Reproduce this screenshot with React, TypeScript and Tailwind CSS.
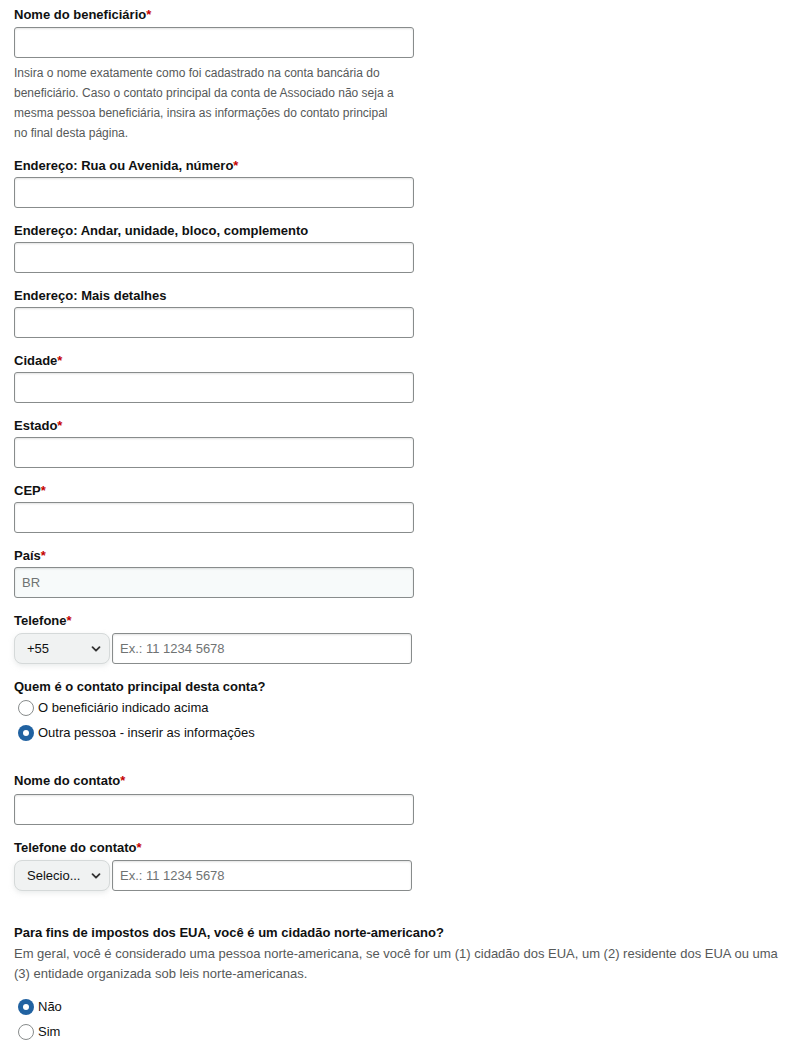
import React from 'react';

const Label: React.FC<{ text: string; required?: boolean }> = ({ text, required }) => (
  <div className="text-[13px] font-bold leading-[17px] text-[#0f1111]">
    {text}
    {required && <span className="text-[#c40000]">*</span>}
  </div>
);

const TextInput: React.FC<{ value?: string; disabled?: boolean; placeholder?: string; className?: string }> = ({
  value,
  disabled,
  placeholder,
  className = ''
}) => (
  <div
    className={`h-[31px] rounded-[3px] border border-[#888c8c] flex items-center px-[7px] text-[13px] ${
      disabled ? 'bg-[#f7fafa] text-[#6f7373]' : 'bg-white text-[#0f1111]'
    } shadow-[inset_0_1px_2px_rgba(15,17,17,0.12)] ${className}`}
  >
    {value}
    {placeholder && <span className="text-[#6f7373]">{placeholder}</span>}
  </div>
);

const Field: React.FC<{ label: string; required?: boolean; value?: string; disabled?: boolean; gap?: string }> = ({
  label,
  required,
  value,
  disabled,
  gap = 'gap-[3px]'
}) => (
  <div className={`flex flex-col ${gap}`}>
    <Label text={label} required={required} />
    <TextInput value={value} disabled={disabled} className="w-[400px]" />
  </div>
);

const PhoneField: React.FC<{ label: string; code: string }> = ({ label, code }) => (
  <div className="flex flex-col gap-[4px]">
    <Label text={label} required />
    <div className="flex gap-[2px] items-center">
      <div className="w-[96px] h-[31px] rounded-[8px] bg-[#f0f2f2] border border-[#d5d9d9] flex items-center justify-between pl-[12px] pr-[7px] text-[13px] text-[#0f1111] shadow-[0_2px_5px_rgba(213,217,217,0.5)]">
        <span>{code}</span>
        <svg width="12" height="12" viewBox="0 0 12 12" fill="none">
          <path d="M2.5 4.2 6 7.7 9.5 4.2" stroke="#333" strokeWidth="1.8" strokeLinecap="round" strokeLinejoin="round" />
        </svg>
      </div>
      <TextInput placeholder="Ex.: 11 1234 5678" className="w-[300px]" />
    </div>
  </div>
);

const Radio: React.FC<{ label: string; checked?: boolean }> = ({ label, checked }) => (
  <div className="flex items-center gap-[4px] h-[25px] pl-[4px]">
    {checked ? (
      <span className="w-[16px] h-[16px] rounded-full bg-[#2162a1] flex items-center justify-center">
        <span className="w-[6px] h-[6px] rounded-full bg-white" />
      </span>
    ) : (
      <span className="w-[16px] h-[16px] rounded-full border border-[#888c8c] bg-white" />
    )}
    <span className="text-[13px] text-[#0f1111]">{label}</span>
  </div>
);

export default function App() {
  return (
    <div className="w-[795px] min-h-[1060px] bg-white pl-[14px] pt-[6px] font-['Liberation_Sans',Arial,sans-serif]">
      <div className="flex flex-col gap-[4px]">
        <Label text="Nome do beneficiário" required />
        <TextInput className="w-[400px]" />
      </div>
      <p className="w-[385px] mt-[5px] text-[12px] leading-[20px] text-[#565959]">
        Insira o nome exatamente como foi cadastrado na conta bancária do beneficiário. Caso o contato principal
        da conta de Associado não seja a mesma pessoa beneficiária, insira as informações do contato principal
        no final desta página.
      </p>
      <div className="flex flex-col gap-[14px] mt-[14px]">
        <Field label="Endereço: Rua ou Avenida, número" required />
        <Field label="Endereço: Andar, unidade, bloco, complemento" />
        <Field label="Endereço: Mais detalhes" />
        <Field label="Cidade" required />
        <Field label="Estado" required />
        <Field label="CEP" required />
        <Field label="País" required value="BR" disabled />
        <PhoneField label="Telefone" code="+55" />
      </div>
      <div className="mt-[14px]">
        <Label text="Quem é o contato principal desta conta?" />
        <div>
          <Radio label="O beneficiário indicado acima" />
          <Radio label="Outra pessoa - inserir as informações" checked />
        </div>
      </div>
      <div className="flex flex-col gap-[14px] mt-[27px]">
        <Field label="Nome do contato" required gap="gap-[5px]" />
        <PhoneField label="Telefone do contato" code="Selecio..." />
      </div>
      <div className="mt-[33px]">
        <Label text="Para fins de impostos dos EUA, você é um cidadão norte-americano?" />
        <p className="mt-[3px] w-[770px] text-[13px] leading-[20px] text-[#565959]">
          Em geral, você é considerado uma pessoa norte-americana, se você for um (1) cidadão dos EUA, um (2)
          residente dos EUA ou uma (3) entidade organizada sob leis norte-americanas.
        </p>
        <div className="mt-[10px]">
          <Radio label="Não" checked />
          <Radio label="Sim" />
        </div>
      </div>
    </div>
  );
}
